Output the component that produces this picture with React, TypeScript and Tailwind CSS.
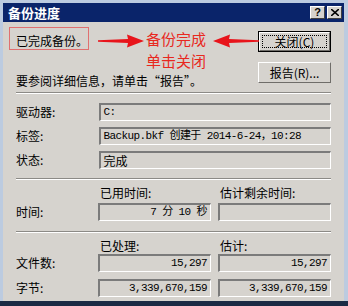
import React from 'react';

const cjk = { fontFamily: '"Noto Sans CJK SC", "Noto Sans", sans-serif' };
const mono = { fontFamily: '"Liberation Mono", "Noto Sans CJK SC", monospace' };

// sunken classic field
const Field: React.FC<{ text?: string; right?: boolean; w?: string; m?: boolean }> = ({ text, right, w = 'w-[233px]', m }) => (
  <div
    className={`${w} h-[18px] border-t-2 border-l-2 border-b border-r border-t-[#7b7b7b] border-l-[#7b7b7b] border-b-white border-r-white flex items-center whitespace-nowrap overflow-hidden leading-none text-black ${m ? 'text-[11px] tracking-[-0.6px]' : 'text-[12px]'} ${right ? 'justify-end pr-[3px]' : 'pl-[2px]'}`}
    style={m ? mono : cjk}
  >
    {text}
  </div>
);

const Sep: React.FC = () => (
  <div className="h-[2px] border-t border-t-[#8c8a86] border-b border-b-white" />
);

const Btn: React.FC<{ children: React.ReactNode; def?: boolean }> = ({ children, def }) => (
  <div
    className={`w-[73px] h-[21px] bg-[#d6d3ce] flex items-center justify-center text-[12px] leading-none text-black ${def ? 'border border-black' : ''}`}
    style={cjk}
  >
    <div className="w-full h-full border-t border-l border-t-white border-l-white border-b border-r border-b-[#6f6d69] border-r-[#6f6d69] flex items-center justify-center p-[2px]">
      <div className={`w-full h-full flex items-center justify-center ${def ? 'border border-dotted border-black' : ''}`}>
        {children}
      </div>
    </div>
  </div>
);

const Arrow: React.FC<{ left?: boolean }> = ({ left }) => (
  <svg width="46" height="14" viewBox="0 0 46 14" style={left ? { transform: 'scaleX(-1)' } : undefined}>
    <path d="M0 6.2 L30 5 L29 0.5 L46 7 L29 13.5 L30 9 L0 7.8 Z" fill="#e8141b" />
  </svg>
);

const Row: React.FC<{ label: string; children: React.ReactNode }> = ({ label, children }) => (
  <div className="flex items-center h-[18px]">
    <div className="w-[84px] text-[12px] text-black" style={cjk}>{label}</div>
    {children}
  </div>
);

export default function App() {
  return (
    <div className="w-[348px] h-[306px] bg-[#bccbe0] overflow-hidden flex flex-col">
      <div className="relative mt-[3px] ml-[3px] w-[341px] flex-1 flex flex-col bg-[#d6d3ce]">
        {/* title bar */}
        <div className="h-[19px] bg-[#0a246a] flex items-center justify-between pl-[5px] pr-[2px]">
          <span className="text-white font-bold text-[13px] leading-none" style={cjk}>备份进度</span>
          <div className="flex gap-[2px]">
            <div className="w-[15px] h-[13px] bg-[#d6d3ce] border-t border-l border-white border-b border-r border-b-[#404040] border-r-[#404040] flex items-center justify-center text-[11px] font-bold leading-none text-black" style={{ fontFamily: '"Liberation Sans", sans-serif' }}>?</div>
            <div className="w-[15px] h-[13px] bg-[#d6d3ce] border-t border-l border-white border-b border-r border-b-[#404040] border-r-[#404040] flex items-center justify-center">
              <svg width="8" height="7" viewBox="0 0 8 7"><path d="M0 0 L8 7 M8 0 L0 7" stroke="#000" strokeWidth="1.6" /></svg>
            </div>
          </div>
        </div>

        {/* body */}
        <div className="px-[13px] pt-[9px] flex flex-col">
          <div className="flex justify-between h-[60px]">
            <div className="flex flex-col text-[12px] text-black" style={cjk}>
              <div className="mt-[2px] h-[16px] flex items-center">已完成备份。</div>
              <div className="mt-[24px] h-[16px] flex items-center">要参阅详细信息，请单击“报告”。</div>
            </div>
            <div className="flex flex-col gap-[10px]">
              <Btn def>关闭(C)</Btn>
              <Btn>报告(R)...</Btn>
            </div>
          </div>

          <div className="mt-[1px]"><Sep /></div>

          <div className="flex flex-col gap-[6px] mt-[9px]">
            <Row label="驱动器:"><Field text="C:" m /></Row>
            <Row label="标签:"><Field text="Backup.bkf 创建于 2014-6-24，10:28" m /></Row>
            <Row label="状态:"><Field text="完成" /></Row>
          </div>

          <div className="mt-[9px]"><Sep /></div>

          <div className="flex mt-[5px] text-[12px] text-black h-[15px] items-center" style={cjk}>
            <div className="w-[84px]" />
            <div className="w-[120px]">已用时间:</div>
            <div>估计剩余时间:</div>
          </div>
          <div className="mt-[3px]">
            <Row label="时间:">
              <div className="flex gap-[7px]">
                <Field w="w-[113px]" right text="7 分 10 秒" m />
                <Field w="w-[113px]" />
              </div>
            </Row>
          </div>

          <div className="mt-[10px]"><Sep /></div>

          <div className="flex mt-[5px] text-[12px] text-black h-[15px] items-center" style={cjk}>
            <div className="w-[84px]" />
            <div className="w-[120px]">已处理:</div>
            <div>估计:</div>
          </div>
          <div className="flex flex-col gap-[7px] mt-[1px]">
            <Row label="文件数:">
              <div className="flex gap-[7px]">
                <Field w="w-[113px]" right text="15,297" m />
                <Field w="w-[113px]" right text="15,297" m />
              </div>
            </Row>
            <Row label="字节:">
              <div className="flex gap-[7px]">
                <Field w="w-[113px]" right text="3,339,670,159" m />
                <Field w="w-[113px]" right text="3,339,670,159" m />
              </div>
            </Row>
          </div>
        </div>

        {/* red annotations */}
        <div className="absolute left-[6px] top-[24px] w-[80px] h-[23px] border border-[#e07070]" />
        <div className="absolute left-[95px] top-[31px]"><Arrow /></div>
        <div className="absolute left-[143px] top-[25px] flex flex-col text-[15px] leading-[22px] text-[#e8281e]" style={cjk}>
          <div>备份完成</div>
          <div>单击关闭</div>
        </div>
        <div className="absolute left-[210px] top-[31px]"><Arrow left /></div>
      </div>
      <div className="h-[5px] bg-[#1b2a44]" />
    </div>
  );
}
